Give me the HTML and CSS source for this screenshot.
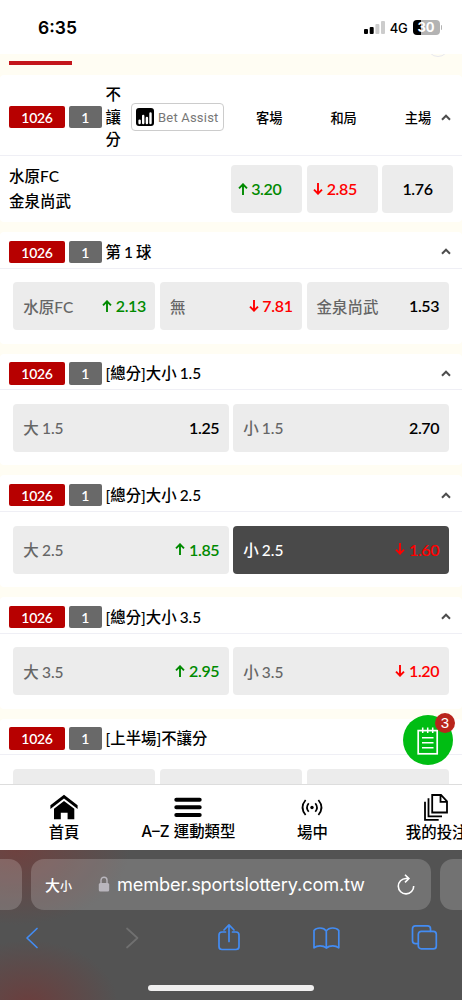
FILE: index.html
```html
<!DOCTYPE html>
<html lang="zh-Hant">
<head>
<meta charset="utf-8">
<title>運動彩券</title>
<link rel="stylesheet" href="styles.css">
</head>
<body>
<svg class="defs" width="0" height="0">
  <symbol id="caret" viewBox="0 0 10 7"><path d="M1 5.8L5 1.7L9 5.8" fill="none" stroke="#4d4d4d" stroke-width="2"/></symbol>
  <symbol id="arrow" viewBox="0 0 10 12"><path d="M5 12V1.5M1 5.3L5 1.3L9 5.3" fill="none" stroke="currentColor" stroke-width="1.9"/></symbol>
</svg>
<div class="phone">
  <header class="status">
    <span class="time">6:35</span>
    <div class="indicators">
      <svg width="21" height="13" viewBox="0 0 21 13"><rect y="8" width="4" height="5" rx="1"/><rect x="5.7" y="6" width="4" height="7" rx="1"/><rect x="11.4" y="3" width="4" height="10" rx="1" fill="#ccc"/><rect x="17" width="4" height="13" rx="1" fill="#ccc"/></svg>
      <span class="network">4G</span>
      <span class="battery">30</span><i class="battery-tip"></i>
    </div>
  </header>

  <main class="content">
    <div class="tabs"><i class="tab-line"></i><i class="tab-circle"></i></div>

    <section class="card card-main">
      <div class="head">
        <span class="code">1026</span><span class="count">1</span>
        <span class="title title-stack">不讓分</span>
        <span class="assist"><svg width="18" height="18" viewBox="0 0 18 18"><rect width="18" height="18" rx="3"/><path d="M3.6 15V12.6M7.2 15V8M10.9 15V10M14.5 15V5.5" stroke="#fff" stroke-width="2.4" stroke-linecap="round"/></svg>Bet Assist</span>
        <div class="cols"><span>客場</span><span>和局</span><span>主場</span></div>
        <svg class="caret"><use href="#caret"/></svg>
      </div>
      <div class="match">
        <div class="teams"><div>水原FC</div><div>金泉尚武</div></div>
        <div class="odds-row">
          <div class="odd up"><svg class="arrow"><use href="#arrow"/></svg>3.20</div>
          <div class="odd down"><svg class="arrow"><use href="#arrow"/></svg>2.85</div>
          <div class="odd">1.76</div>
        </div>
      </div>
    </section>

    <section class="card">
      <div class="head"><span class="code">1026</span><span class="count">1</span><span class="title">第 1 球</span><svg class="caret"><use href="#caret"/></svg></div>
      <div class="body">
        <div class="pick"><span>水原FC</span><b class="up"><svg class="arrow"><use href="#arrow"/></svg>2.13</b></div>
        <div class="pick"><span>無</span><b class="down"><svg class="arrow"><use href="#arrow"/></svg>7.81</b></div>
        <div class="pick"><span>金泉尚武</span><b>1.53</b></div>
      </div>
    </section>

    <section class="card">
      <div class="head"><span class="code">1026</span><span class="count">1</span><span class="title">[總分]大小 1.5</span><svg class="caret"><use href="#caret"/></svg></div>
      <div class="body">
        <div class="pick"><span>大 1.5</span><b>1.25</b></div>
        <div class="pick"><span>小 1.5</span><b>2.70</b></div>
      </div>
    </section>

    <section class="card">
      <div class="head"><span class="code">1026</span><span class="count">1</span><span class="title">[總分]大小 2.5</span><svg class="caret"><use href="#caret"/></svg></div>
      <div class="body">
        <div class="pick"><span>大 2.5</span><b class="up"><svg class="arrow"><use href="#arrow"/></svg>1.85</b></div>
        <div class="pick selected"><span>小 2.5</span><b class="down"><svg class="arrow"><use href="#arrow"/></svg>1.60</b></div>
      </div>
    </section>

    <section class="card">
      <div class="head"><span class="code">1026</span><span class="count">1</span><span class="title">[總分]大小 3.5</span><svg class="caret"><use href="#caret"/></svg></div>
      <div class="body">
        <div class="pick"><span>大 3.5</span><b class="up"><svg class="arrow"><use href="#arrow"/></svg>2.95</b></div>
        <div class="pick"><span>小 3.5</span><b class="down"><svg class="arrow"><use href="#arrow"/></svg>1.20</b></div>
      </div>
    </section>

    <section class="card">
      <div class="head"><span class="code">1026</span><span class="count">1</span><span class="title">[上半場]不讓分</span></div>
      <div class="body"><div class="pick"></div><div class="pick"></div><div class="pick"></div></div>
    </section>

    <div class="slip">
      <svg width="22" height="28" viewBox="0 0 22 28" fill="none" stroke="#fff"><rect x="1.2" y="3.6" width="19" height="23.2" stroke-width="1.7"/><path d="M5.7 .5V6M10.7 .5V6M15.7 .5V6" stroke-width="1.5"/><path d="M5 10.7H16.5M5 15.7H16.5M5 20.7H16.5" stroke-width="1.6"/></svg>
      <span class="badge">3</span>
    </div>
  </main>

  <nav class="nav">
    <a><svg width="28" height="28" viewBox="0 0 28 28"><path d="M14 .8L27.6 11.3V15L14 4.6L.4 15V11.3Z"/><path d="M14 7L24.3 14.8V25.3H17.6V18.8H10.8V25.3H4V14.8Z"/></svg><span>首頁</span></a>
    <a><svg width="28" height="28" viewBox="0 0 28 28"><path d="M2.3 5.7H25.7M2.3 13.3H25.7M2.3 20.9H25.7" stroke="#000" stroke-width="4" stroke-linecap="round"/></svg><span class="wide">A–Z 運動類型</span></a>
    <a><svg width="28" height="28" viewBox="0 0 28 28" fill="none" stroke="#000" stroke-width="1.7"><circle cx="14" cy="13.5" r="1.7" fill="#000" stroke="none"/><path d="M10.7 9.2Q7.3 13.5 10.7 17.8M17.3 9.2Q20.7 13.5 17.3 17.8M7.6 6Q1.4 13.5 7.6 21M20.4 6Q26.6 13.5 20.4 21"/></svg><span>場中</span></a>
    <a><svg width="28" height="28" viewBox="0 0 28 28" fill="none" stroke="#000" stroke-width="1.8"><path d="M9.2 1H18L24 7.3V18.5H9.2ZM17.5 1.3V7.8H23.8M5.5 4.3V22.3H19M2 7.8V25.8H15.7"/></svg><span>我的投注</span></a>
  </nav>

  <footer class="browser">
    <div class="url-row">
      <div class="url-side left"></div>
      <div class="url">
        <span class="size">大<small>小</small></span>
        <span class="address"><svg width="12" height="16" viewBox="0 0 12 16"><path d="M3 8V4.2a3 3 0 0 1 6 0V8" fill="none" stroke="#b9b6bd" stroke-width="1.4"/><rect x=".8" y="7" width="10.4" height="8.5" rx="1.5" fill="#b9b6bd"/></svg><span>member.sportslottery.com.tw</span></span>
        <svg class="reload" width="18" height="22" viewBox="0 0 18 22" fill="none" stroke="#fff" stroke-width="1.6"><path d="M11 4.5H9A7.7 7.7 0 1 0 16.7 12M8 .8L11.9 4.6L8 8.4"/></svg>
      </div>
      <div class="url-side right"></div>
    </div>
    <div class="tools">
      <svg viewBox="0 0 28 28"><path d="M19 4.5L9 14L19 23.5"/></svg>
      <svg class="disabled" viewBox="0 0 28 28"><path d="M9 4.5L19.5 14L9 23.5"/></svg>
      <svg viewBox="0 0 28 28"><path d="M9.5 8H6Q3 8 3 11V22.5Q3 25.5 6 25.5H20Q23 25.5 23 22.5V11Q23 8 20 8H16.5M13 17.5V1M8 6L13 .9L18 6"/></svg>
      <svg viewBox="0 0 28 28"><path d="M13.3 24V7Q11.3 4 7 4Q3 4 1 6.5V23.8Q3.5 21.8 7 21.8Q11 21.8 13.3 24Q15.8 21.8 19.8 21.8Q23.2 21.8 25.8 23.8V6.5Q23.8 4 19.8 4Q15.3 4 13.3 7"/></svg>
      <svg viewBox="0 0 28 28"><rect x="7.3" y="7.3" width="18" height="17.6" rx="3"/><path d="M7.3 19.7H4.5Q1.5 19.7 1.5 16.7V4.7Q1.5 1.8 4.5 1.8H16.5Q19.5 1.8 19.5 4.7V7.3"/></svg>
    </div>
    <i class="home"></i>
  </footer>
</div>
</body>
</html>
```
FILE: styles.css
```css
* { box-sizing: border-box; }
body { margin: 0; font-family: Lato, "Noto Sans CJK TC", sans-serif; color: #000; }
.defs { position: absolute; }
svg { display: block; flex: none; }
.phone { width: 462px; height: 1000px; overflow: hidden; display: flex; flex-direction: column; background: #fff; }

.status { height: 53.5px; flex: none; display: flex; justify-content: space-between; padding: 0 20px 0 38px; font-family: Inter, sans-serif; }
.time { font-size: 17.5px; font-weight: 600; line-height: 56px; }
.indicators { display: flex; align-items: center; height: 55px; }
.network { font-size: 13px; font-weight: 500; margin: 0 5px 0 5px; letter-spacing: -.2px; }
.battery { width: 27px; height: 15px; border-radius: 4px; background: linear-gradient(90deg, #000 8px, #b3b3b3 8px); color: #fff; font-size: 13px; font-weight: 700; line-height: 15px; text-align: center; }
.battery-tip { width: 1.5px; height: 5px; margin-left: 1px; border-radius: 0 2px 2px 0; background: #b3b3b3; }

.content { height: 730px; flex: none; overflow: hidden; background: #fffdf3; position: relative; }
.tabs { height: 21.5px; padding: 7.5px 0 0 9px; position: relative; overflow: hidden; }
.tab-line { display: block; width: 62.5px; height: 3.7px; background: #c4161c; }
.tab-circle { position: absolute; right: 13px; top: -19px; width: 22px; height: 22px; border: 1px solid #e8e8ee; border-radius: 50%; }

.card { height: 111.7px; margin-bottom: 10px; background: #fff; border-radius: 4px; }
.card-main { height: 147px; }
.head { height: 36.7px; border-bottom: 1px solid #efeff5; display: flex; align-items: center; padding: 4px 11px 0 9px; }
.card-main .head { height: 81px; padding-top: 4px; }
.code, .count { height: 22.5px; border-radius: 2px; color: #fff; font-size: 14px; font-weight: 600; line-height: 23px; text-align: center; letter-spacing: -.3px; }
.code { width: 56px; background: #b70000; margin-right: 4px; flex: none; }
.count { width: 32.5px; background: #696969; margin-right: 4px; flex: none; }
.title { font-size: 15.4px; font-weight: 500; line-height: 22.5px; white-space: nowrap; word-spacing: -.8px; }
.title-stack { width: 15.5px; margin-right: 9.5px; white-space: normal; flex: none; }
.caret { width: 10px; height: 7px; margin-left: auto; }
.assist { width: 93.5px; height: 28.5px; flex: none; border: 1px solid #ccc; border-radius: 4px; display: flex; align-items: center; gap: 4px; padding-left: 4.5px; font: 400 13px Roboto, sans-serif; letter-spacing: .2px; color: #777; white-space: nowrap; }
.cols { display: flex; flex: none; gap: 48px; margin-left: 32px; font-size: 13.2px; font-weight: 500; }

.match { display: flex; justify-content: space-between; padding: 9px 9px 0; }
.teams { font-size: 15.5px; line-height: 24.2px; font-weight: 500; margin-top: -.6px; }
.odds-row { display: flex; gap: 4.5px; }
.odd { width: 71px; height: 48px; border-radius: 4px; background: #ececec; display: flex; align-items: center; justify-content: center; font-size: 16px; font-weight: 600; letter-spacing: -.35px; padding-bottom: 1px; }
.odd.up, .odd.down { justify-content: flex-start; padding-left: 6.5px; }
.up { color: #008a00; }
.down { color: #f00; }
.arrow { width: 10px; height: 12px; margin-right: 3.7px; }
.down .arrow { transform: rotate(180deg); }

.body { display: flex; gap: 4.5px; padding: 13.5px 13.3px 0; }
.pick { flex: 1; height: 48px; border-radius: 4px; background: #ececec; display: flex; align-items: center; justify-content: space-between; padding: 0 9.5px 1px 10px; font-size: 15.5px; font-weight: 500; color: #666; white-space: nowrap; word-spacing: -.8px; }
.pick b { display: flex; align-items: center; font-size: 16px; font-weight: 600; color: #000; letter-spacing: -.35px; }
.pick b.up { color: #008a00; }
.pick b.down { color: #f00; }
.pick.selected { background: #494949; color: #fff; }

.slip { position: absolute; left: 403px; top: 661.8px; width: 50px; height: 50px; border-radius: 50%; background: #00bd13; display: flex; align-items: center; justify-content: center; }
.slip svg { margin-top: 2px; }
.badge { position: absolute; left: 32px; top: -2.5px; width: 20px; height: 20px; border-radius: 50%; background: #b9251c; color: #fff; font: 15px/20px "Liberation Sans", sans-serif; text-align: center; }

.nav { height: 66.5px; flex: none; border-top: 1px solid #ddd; background: #fff; display: grid; grid-template-columns: repeat(4, 124.2px); padding-left: 2px; }
.nav a { display: flex; flex-direction: column; align-items: center; padding-top: 9px; }
.nav span { font-size: 15.4px; font-weight: 500; line-height: 22px; margin-top: -1px; white-space: nowrap; }
.nav .wide { font-family: Inter, "Noto Sans CJK TC", sans-serif; }

.browser { height: 150px; flex: none; background: radial-gradient(ellipse 90px 65px at 28px 155px, #6b3e3d, rgba(100,65,62,0)), radial-gradient(ellipse 115px 75px at 15px 0, #6e4240, rgba(100,65,62,0)), #535353; }
.url-row { display: flex; justify-content: space-between; padding-top: 9px; }
.url, .url-side { height: 51px; background: rgba(255,255,255,.18); border-radius: 13px; }
.url { width: 400px; display: flex; align-items: center; padding: 0 16px 0 14px; color: #fff; }
.url-side { width: 22px; }
.left { border-radius: 0 13px 13px 0; }
.right { border-radius: 13px 0 0 13px; }
.size { font-size: 15px; font-weight: 500; white-space: nowrap; }
.size small { font-size: 12px; }
.address { display: flex; align-items: center; gap: 7px; margin: 0 auto 2px 26px; font: 400 18.2px Inter, sans-serif; letter-spacing: -.15px; white-space: nowrap; }
.tools { display: flex; justify-content: space-between; padding: 14px 23px 0 18px; }
.tools svg { width: 28px; height: 28px; fill: none; stroke: #438cf3; stroke-width: 1.7; stroke-linecap: round; stroke-linejoin: round; }
.tools .disabled { stroke: #707070; margin-left: 2px; }
.home { display: block; width: 166px; height: 6px; margin: 33px auto 0; border-radius: 3px; background: #f0efef; }
```
